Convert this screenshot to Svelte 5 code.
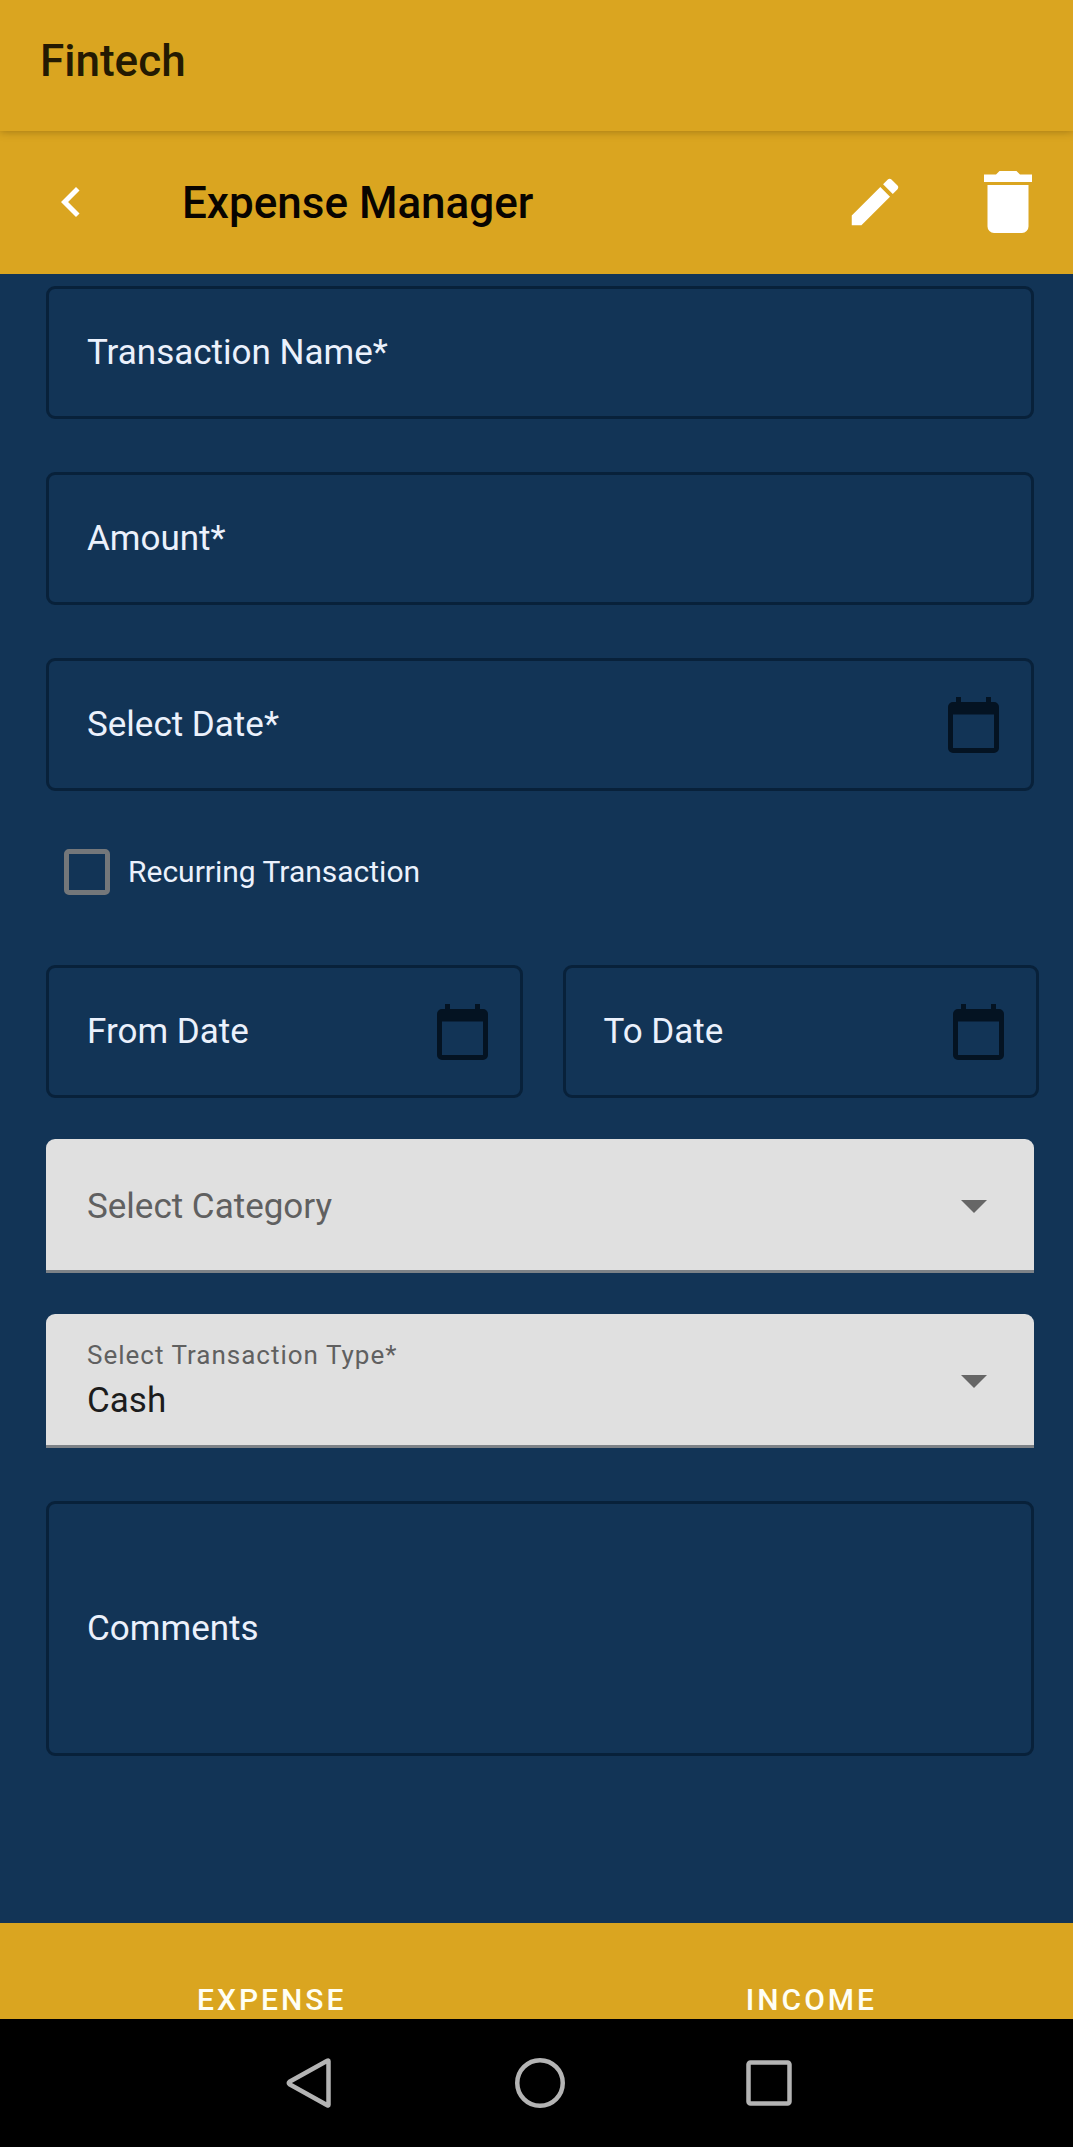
<script lang="ts">
  let name = $state('');
  let amount = $state('');
  let date = $state('');
  let recurring = $state(false);
  let fromDate = $state('');
  let toDate = $state('');
  let category = $state('');
  let payment = $state('Cash');
  let comments = $state('');
</script>

{#snippet calendar()}
  <svg class="calendar" viewBox="0 0 51 56" aria-hidden="true">
    <path
      fill-rule="evenodd"
      d="M8 0h5v5h25V0h5v5h3a5 5 0 0 1 5 5v41a5 5 0 0 1-5 5H5a5 5 0 0 1-5-5V10a5 5 0 0 1 5-5h3zM5 17.500v33.500h41V17.500z"
    />
  </svg>
{/snippet}

{#snippet arrow()}
  <svg class="arrow" viewBox="0 0 26 13" aria-hidden="true"><path d="M0 0h26L13 13z" /></svg>
{/snippet}

<div class="screen">
  <header class="app-bar">Fintech</header>

  <div class="toolbar">
    <button class="icon-button" type="button" aria-label="Back">
      <svg class="back" viewBox="0 0 24 24"><path d="M15.410 7.410 14 6l-6 6 6 6 1.410-1.410L10.830 12z" /></svg>
    </button>
    <h1>Expense Manager</h1>
    <button class="icon-button" type="button" aria-label="Edit">
      <svg class="edit" viewBox="0 0 24 24">
        <path
          d="M3 17.250V21h3.750L17.810 9.940l-3.750-3.750zM20.710 7.040c.39-.39.39-1.020 0-1.410l-2.340-2.340c-.39-.39-1.020-.39-1.410 0l-1.830 1.830 3.750 3.750z"
        />
      </svg>
    </button>
    <button class="icon-button" type="button" aria-label="Delete">
      <svg class="trash" viewBox="0 0 48 62">
        <path d="M0 3.500h12L15.500 0h17L36 3.500h12V11H0zM3.500 14h41v41.500a6.500 6.500 0 0 1-6.500 6.500H10a6.500 6.500 0 0 1-6.500-6.500z" />
      </svg>
    </button>
  </div>

  <form>
    <div class="field">
      <label for="name">Transaction Name*</label>
      <input id="name" type="text" placeholder=" " bind:value={name} />
    </div>
    <div class="field">
      <label for="amount">Amount*</label>
      <input id="amount" type="text" inputmode="decimal" placeholder=" " bind:value={amount} />
    </div>
    <div class="field">
      <label for="date">Select Date*</label>
      <input id="date" type="text" placeholder=" " bind:value={date} />
      <button class="icon-button" type="button" aria-label="Choose date">{@render calendar()}</button>
    </div>

    <label class="check">
      <input type="checkbox" bind:checked={recurring} />
      <span>Recurring Transaction</span>
    </label>

    <div class="range">
      <div class="field">
        <label for="from">From Date</label>
        <input id="from" type="text" placeholder=" " bind:value={fromDate} />
        <button class="icon-button" type="button" aria-label="Choose start date">{@render calendar()}</button>
      </div>
      <div class="field">
        <label for="to">To Date</label>
        <input id="to" type="text" placeholder=" " bind:value={toDate} />
        <button class="icon-button" type="button" aria-label="Choose end date">{@render calendar()}</button>
      </div>
    </div>

    <div class="dropdown">
      <div class="stack" class:filled={category !== ''}>
        <label for="category">Select Category</label>
        <select id="category" bind:value={category}>
          <option value=""></option>
          <option>Food</option>
          <option>Travel</option>
        </select>
      </div>
      {@render arrow()}
    </div>

    <div class="dropdown">
      <div class="stack" class:filled={payment !== ''}>
        <label for="payment">Select Transaction Type*</label>
        <select id="payment" bind:value={payment}>
          <option>Cash</option>
          <option>Card</option>
        </select>
      </div>
      {@render arrow()}
    </div>

    <div class="field comments">
      <label for="comments">Comments</label>
      <textarea id="comments" placeholder=" " bind:value={comments}></textarea>
    </div>
  </form>

  <div class="tabs">
    <button type="button">EXPENSE</button>
    <button type="button">INCOME</button>
  </div>

  <nav class="system" aria-label="System">
    <button class="icon-button" type="button" aria-label="Back">
      <svg viewBox="0 0 50 50"><path d="M43.500 3.200v43.600q0 1.200-1.200.5L4.500 26.200q-1.500-1.200 0-2.400L42.300 2.700q1.200-.7 1.200.5z" /></svg>
    </button>
    <button class="icon-button" type="button" aria-label="Home">
      <svg viewBox="0 0 50 50"><circle cx="25" cy="25" r="22.750" /></svg>
    </button>
    <button class="icon-button" type="button" aria-label="Recent apps">
      <svg viewBox="0 0 50 50"><rect x="3.500" y="4.500" width="41" height="41" rx="2" /></svg>
    </button>
  </nav>
</div>

<style>
  :global(body) {
    margin: 0;
    background: #123456;
  }

  .screen {
    min-height: 100vh;
    display: flex;
    flex-direction: column;
    background: #123456;
    color: #ebf1fc;
    font-family: Roboto, 'Liberation Sans', sans-serif;
    font-size: 35px;
    line-height: 40px;
  }

  * {
    box-sizing: border-box;
  }

  button,
  input,
  select,
  textarea {
    margin: 0;
    padding: 0;
    border: 0;
    background: none;
    color: inherit;
    font: inherit;
    appearance: none;
  }

  svg {
    display: block;
    fill: currentColor;
  }

  .app-bar,
  h1 {
    font-size: 44px;
    line-height: 50px;
    font-weight: 500;
  }

  .app-bar {
    z-index: 1;
    padding: 36px 40px 45px;
    background: #daa520;
    color: #241a02;
    box-shadow: 0 1px 8px rgb(70 45 0 / 35%);
  }

  .toolbar {
    height: 143px;
    display: flex;
    align-items: center;
    padding: 0 41px 2px;
    background: #daa520;
    color: #fff;
  }

  .icon-button {
    flex: none;
    cursor: pointer;
  }

  .back {
    width: 60px;
    height: 60px;
  }

  .edit {
    width: 62px;
    height: 62px;
    margin-right: 78px;
  }

  .trash {
    width: 48px;
    height: 62px;
  }

  h1 {
    flex: 1;
    margin: 0;
    padding: 3px 0 0 81px;
    color: #080400;
  }

  form {
    flex: 1;
    padding: 12px 39px 40px 46px;
  }

  .field {
    height: 133px;
    display: grid;
    grid-template-columns: 1fr auto;
    align-items: center;
    margin: 0 0 53px;
    padding: 0 32px 0 38px;
    border: 3px solid #08213a;
    border-radius: 9px;
  }

  .field label,
  .field input,
  .field textarea {
    grid-area: 1 / 1;
    min-width: 0;
  }

  .field input,
  .field textarea {
    width: 100%;
    height: 100%;
    outline: none;
    resize: none;
  }

  .field label {
    pointer-events: none;
  }

  .field:has(:not(:placeholder-shown):is(input, textarea)) label {
    visibility: hidden;
  }

  .calendar {
    width: 51px;
    height: 56px;
    color: #041322;
  }

  .check {
    display: flex;
    align-items: center;
    gap: 18px;
    margin: 58px 18px 70px;
    font-size: 30px;
  }

  .check input {
    width: 46px;
    height: 46px;
    border: 5px solid #74777a;
    border-radius: 5px;
  }

  .check input:checked {
    background: #daa520;
  }

  .range {
    display: grid;
    grid-template-columns: 1fr 1fr;
    gap: 40px;
    margin: 0 -5px 41px 0;
  }

  .range .field {
    margin: 0;
  }

  .dropdown {
    height: 134px;
    display: grid;
    grid-template-columns: 1fr auto;
    align-items: center;
    margin: 0 0 41px;
    padding: 4px 47px 0 41px;
    border-bottom: 3px solid #7d8287;
    border-radius: 9px 9px 0 0;
    background: #e0e0e0;
    color: #1c1c1c;
  }

  .stack {
    display: grid;
    align-items: center;
  }

  .stack label {
    grid-area: 1 / 1;
    color: #606060;
    pointer-events: none;
  }

  .stack select {
    grid-area: 1 / 1;
    width: 100%;
    height: 40px;
  }

  .stack.filled {
    grid-template-rows: 44px 48px;
    padding-bottom: 6px;
  }

  .filled label {
    font-size: 26px;
    line-height: 30px;
    letter-spacing: 1px;
  }

  .filled select {
    grid-row: 2;
  }

  .arrow {
    width: 26px;
    height: 13px;
    color: #666;
  }

  .comments {
    height: 255px;
    margin: 53px 0 0;
  }

  .tabs {
    display: flex;
    justify-content: space-between;
    padding: 0 150px;
    background: #daa520;
    color: #fffff4;
  }

  .tabs button {
    padding: 57px 46px 0 47px;
    height: 96px;
    font-size: 30px;
    line-height: 39px;
    font-weight: 500;
    letter-spacing: 3px;
  }

  .system {
    height: 128px;
    display: flex;
    justify-content: center;
    align-items: center;
    gap: 180px;
    padding-left: 6px;
    background: #000;
    color: #b4b4b4;
  }

  .system svg {
    width: 50px;
    height: 50px;
    fill: none;
    stroke: currentColor;
    stroke-width: 4.500px;
    stroke-linejoin: round;
  }
</style>
